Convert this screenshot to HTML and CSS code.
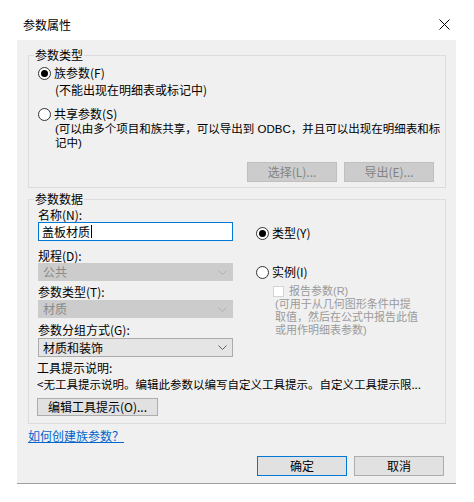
FILE: index.html
```html
<!DOCTYPE html>
<html lang="zh-CN">
<head>
<meta charset="utf-8">
<title>参数属性</title>
<link rel="stylesheet" href="styles.css">
</head>
<body>
<div class="dialog">
  <div class="titlebar">
    <span class="title">参数属性</span>
    <svg class="close" width="11" height="11" viewBox="0 0 11 11"><path d="M0.5 0.5L10.5 10.5M10.5 0.5L0.5 10.5" stroke="#000" stroke-width="1" fill="none"/></svg>
  </div>
  <div class="panel">
    <fieldset class="group g1">
      <legend>参数类型</legend>
      <div class="radio-row"><span class="radio checked"></span><span>族参数(F)</span></div>
      <div class="desc d1">(不能出现在明细表或标记中)</div>
      <div class="radio-row r2"><span class="radio"></span><span>共享参数(S)</span></div>
      <div class="desc d2">(可以由多个项目和族共享，可以导出到 ODBC，并且可以出现在明细表和标<br>记中)</div>
      <div class="btn-row">
        <span class="btn disabled">选择(L)...</span>
        <span class="btn disabled">导出(E)...</span>
      </div>
    </fieldset>

    <fieldset class="group g2">
      <legend>参数数据</legend>
      <div class="data-grid">
        <div class="left-col">
          <div class="lbl">名称(N):</div>
          <div class="textbox"><span>盖板材质</span><span class="caret"></span></div>
          <div class="lbl l2">规程(D):</div>
          <div class="select disabled"><span>公共</span><svg class="chev" width="9" height="5" viewBox="0 0 9 5"><path d="M0.5 0.5L4.5 4.5L8.5 0.5" stroke="#b0b0b0" fill="none"/></svg></div>
          <div class="lbl l3">参数类型(T):</div>
          <div class="select disabled s2"><span>材质</span><svg class="chev" width="9" height="5" viewBox="0 0 9 5"><path d="M0.5 0.5L4.5 4.5L8.5 0.5" stroke="#b0b0b0" fill="none"/></svg></div>
          <div class="lbl l4">参数分组方式(G):</div>
          <div class="select enabled s2"><span>材质和装饰</span><svg class="chev" width="9" height="5" viewBox="0 0 9 5"><path d="M0.5 0.5L4.5 4.5L8.5 0.5" stroke="#606060" fill="none"/></svg></div>
        </div>
        <div class="right-col">
          <div class="radio-row rr1"><span class="radio checked"></span><span>类型(Y)</span></div>
          <div class="radio-row rr2"><span class="radio"></span><span>实例(I)</span></div>
          <div class="check-row"><span class="checkbox"></span><span>报告参数(R)</span></div>
          <div class="gray-desc">(可用于从几何图形条件中提<br>取值，然后在公式中报告此值<br>或用作明细表参数)</div>
        </div>
      </div>
      <div class="tip-lbl">工具提示说明:</div>
      <div class="tip-text">&lt;无工具提示说明。编辑此参数以编写自定义工具提示。自定义工具提示限...</div>
      <span class="btn tip-btn">编辑工具提示(O)...</span>
    </fieldset>

    <a class="help-link" href="#">如何创建族参数？</a>

    <div class="footer">
      <span class="btn ok">确定</span>
      <span class="btn">取消</span>
    </div>
  </div>
</div>
</body>
</html>
```

FILE: styles.css
```css
* { box-sizing: border-box; }
html, body {
  margin: 0;
  padding: 0;
  background: #ffffff;
}
body {
  font-family: "Noto Sans CJK SC", "Liberation Sans", sans-serif;
  font-size: 12px;
  color: #000;
  width: 474px;
  height: 502px;
  overflow: hidden;
}
.dialog {
  width: 474px;
}
.titlebar {
  height: 40px;
  display: flex;
  align-items: flex-start;
  justify-content: space-between;
  padding: 18px 24px 0 23px;
}
.title {
  line-height: 14px;
  font-size: 12px;
}
.close {
  margin-top: 1px;
}
.panel {
  margin-left: 17px;
  width: 439px;
  height: 444px;
  background: #f0f0f0;
  border-bottom: 1px solid #a0a0a0;
  padding-top: 8px;
  display: flex;
  flex-direction: column;
}
.group {
  margin: 0 0 0 11px;
  width: 418px;
  border: 1px solid #dcdcdc;
  min-inline-size: 0;
}
.group legend {
  font-size: 12px;
  line-height: 14px;
  padding: 0 1px;
  margin-left: -4px;
}
.g1 {
  padding: 3px 11px 5px 9px;
}
.radio-row {
  display: flex;
  align-items: center;
  height: 16px;
  line-height: 16px;
  gap: 3px;
}
.radio {
  width: 13px;
  height: 13px;
  border: 1px solid #333;
  border-radius: 50%;
  background: #fff;
  position: relative;
  flex: none;
}
.radio.checked::after {
  content: "";
  position: absolute;
  left: 2px;
  top: 2px;
  width: 7px;
  height: 7px;
  border-radius: 50%;
  background: #000;
}
.desc {
  margin-left: 17px;
  line-height: 12px;
  white-space: nowrap;
}
.d1 { margin-top: 3px; }
.r2 { margin-top: 10px; }
.d2 {
  margin-top: 1px;
  font-family: "Liberation Sans", "Noto Sans CJK SC", sans-serif;
  font-size: 11.5px;
  line-height: 13.5px;
}
.btn-row {
  margin-top: 12px;
  display: flex;
  justify-content: flex-end;
  gap: 7px;
}
.btn {
  display: flex;
  align-items: center;
  justify-content: center;
  width: 90px;
  height: 20px;
  background: #e1e1e1;
  border: 1px solid #adadad;
  color: #000;
  font-size: 12px;
  line-height: 14px;
}
.btn.disabled {
  background: #cccccc;
  border-color: #bfbfbf;
  color: #838383;
}
.g2 {
  margin-top: 4px;
  padding: 2px 11px 7px 9px;
}
.data-grid {
  display: grid;
  grid-template-columns: 195px 1fr;
  column-gap: 23px;
}
.left-col, .right-col {
  display: flex;
  flex-direction: column;
}
.lbl {
  line-height: 14px;
  height: 14px;
}
.l2 { margin-top: 8px; }
.l3 { margin-top: 4px; }
.l4 { margin-top: 5px; }
.textbox {
  height: 19px;
  background: #fff;
  border: 1px solid #0078d7;
  display: flex;
  align-items: center;
  padding-left: 3px;
  line-height: 14px;
}
.caret {
  width: 1px;
  height: 13px;
  background: #000;
  margin-left: 1px;
}
.select {
  height: 18px;
  display: flex;
  align-items: center;
  justify-content: space-between;
  padding: 0 5px 0 4px;
  line-height: 14px;
}
.select.disabled {
  background: #cccccc;
  border: 1px solid #cccccc;
  color: #8a8a8a;
}
.select.enabled {
  background: #e5e5e5;
  border: 1px solid #acacac;
  height: 19px;
}
.s2 { margin-top: 1px; }
.rr1 { margin-top: 17px; }
.rr2 { margin-top: 23px; }
.check-row {
  margin-top: 4px;
  margin-left: 17px;
  display: flex;
  align-items: center;
  height: 14px;
  gap: 5px;
  color: #999;
  font-family: "Liberation Sans", "Noto Sans CJK SC", sans-serif;
  font-size: 11px;
  line-height: 13px;
}
.checkbox {
  width: 11px;
  height: 11px;
  background: #fff;
  border: 1px solid #d4d4d4;
  flex: none;
}
.gray-desc {
  margin-left: 19px;
  font-family: "Liberation Sans", "Noto Sans CJK SC", sans-serif;
  font-size: 11px;
  line-height: 13px;
  color: #9a9a9a;
  white-space: nowrap;
}
.tip-lbl {
  margin-top: 2px;
  line-height: 17px;
  margin-left: -1px;
}
.tip-text {
  line-height: 17px;
  white-space: nowrap;
  margin-left: -1px;
  font-size: 11.5px;
}
.tip-btn {
  margin-top: 5px;
  margin-left: -1px;
  width: 121px;
  height: 18px;
}
.help-link {
  margin: 4px 0 0 11px;
  line-height: 16px;
  color: #0066cc;
  text-decoration: underline;
  align-self: flex-start;
}
.footer {
  margin-top: 12px;
  display: flex;
  justify-content: flex-end;
  gap: 7px;
  padding-right: 12px;
}
.btn.ok {
  border-color: #0078d7;
}
```
